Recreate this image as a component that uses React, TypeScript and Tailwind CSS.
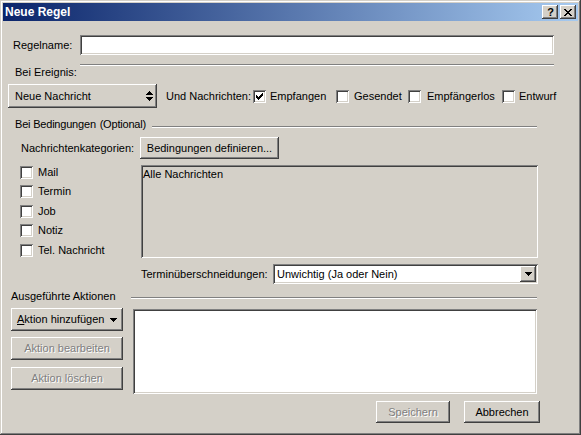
import React from "react";

const raised =
  "bg-[#d4d0c8] shadow-[inset_-1px_-1px_#404040,inset_1px_1px_#ffffff,inset_-2px_-2px_#808080,inset_2px_2px_#d4d0c8]";
const sunken =
  "shadow-[inset_1px_1px_#808080,inset_-1px_-1px_#ffffff,inset_2px_2px_#404040,inset_-2px_-2px_#d4d0c8]";
const disabledText = "text-[#808080] [text-shadow:1px_1px_0_#ffffff]";

function Check({ checked = false }: { checked?: boolean }) {
  return (
    <div className={`relative w-[13px] h-[13px] shrink-0 bg-white ${sunken}`}>
      {checked && (
        <svg
          width="7"
          height="7"
          viewBox="0 0 7 7"
          className="absolute left-[3px] top-[3px]"
          shapeRendering="crispEdges"
        >
          <path
            fill="#000"
            d="M6 0h1v1h-1z M5 1h2v1h-2z M0 2h1v1h-1z M4 2h3v1h-3z M0 3h2v1h-2z M3 3h3v1h-3z M0 4h5v1h-5z M1 5h3v1h-3z M2 6h1v1h-1z"
          />
        </svg>
      )}
    </div>
  );
}

function DownTri({ fill = "#000" }: { fill?: string }) {
  return (
    <svg width="7" height="4" viewBox="0 0 7 4" shapeRendering="crispEdges">
      <path fill={fill} d="M0 0h7v1H0z M1 1h5v1H1z M2 2h3v1H2z M3 3h1v1H3z" />
    </svg>
  );
}

function Etched({ className = "" }: { className?: string }) {
  return <div className={`h-[2px] border-t border-t-[#808080] border-b border-b-white ${className}`} />;
}

export default function App() {
  return (
    <div className="w-[581px] h-[435px] bg-[#d4d0c8] p-[3px] shadow-[inset_-1px_-1px_#404040,inset_1px_1px_#d4d0c8,inset_-2px_-2px_#808080,inset_2px_2px_#ffffff] font-['Liberation_Sans',Arial,sans-serif] text-[11px] leading-[13px] text-black overflow-hidden">
      {/* Title bar */}
      <div className="h-[18px] flex items-center bg-[linear-gradient(to_right,#0a246a,#a6caf0)] pl-[2px] pr-[2px]">
        <div className="flex-1 text-white font-bold text-[12px] leading-[14px]">Neue Regel</div>
        <div className={`w-[16px] h-[14px] flex items-center justify-center ${raised}`}>
          <span className="font-bold text-[11px] leading-[11px] text-black pl-[1px]">?</span>
        </div>
        <div className={`ml-[2px] w-[16px] h-[14px] flex items-center justify-center ${raised}`}>
          <svg width="8" height="7" viewBox="0 0 8 7" shapeRendering="crispEdges">
            <path
              fill="#000"
              d="M0 0h2v1H0z M6 0h2v1H6z M1 1h2v1H1z M5 1h2v1H5z M2 2h4v1H2z M3 3h2v1H3z M2 4h4v1H2z M1 5h2v1H1z M5 5h2v1H5z M0 6h2v1H0z M6 6h2v1H6z"
            />
          </svg>
        </div>
      </div>

      {/* Regelname */}
      <div className="mt-[14px] flex items-center h-[20px]">
        <div className="ml-[10px] w-[67px]">Regelname:</div>
        <div className={`w-[474px] h-[20px] bg-white ${sunken}`} />
      </div>

      {/* Bei Ereignis */}
      <div className="mt-[7px] flex h-[16px]">
        <div className="ml-[12px] w-[65px] mt-[4px]">Bei Ereignis:</div>
        <Etched className="w-[474px] mt-[2px]" />
      </div>

      {/* Neue Nachricht row */}
      <div className="mt-[6px] flex items-center h-[24px]">
        <div className={`ml-[5px] w-[149px] h-[24px] flex items-center pl-[7px] pr-[4px] ${raised}`}>
          <span className="flex-1">Neue Nachricht</span>
          <svg width="7" height="10" viewBox="0 0 7 10" shapeRendering="crispEdges">
            <path
              fill="#000"
              d="M3 0h1v1H3z M2 1h3v1H2z M1 2h5v1H1z M0 3h7v1H0z M0 6h7v1H0z M1 7h5v1H1z M2 8h3v1H2z M3 9h1v1H3z"
            />
          </svg>
        </div>
        <div className="ml-[9px] w-[87px]">Und Nachrichten:</div>
        <div className="flex items-center w-[83px]">
          <Check checked />
          <span className="ml-[4px]">Empfangen</span>
        </div>
        <div className="flex items-center w-[72px]">
          <Check />
          <span className="ml-[5px]">Gesendet</span>
        </div>
        <div className="flex items-center w-[94px]">
          <Check />
          <span className="ml-[6px]">Empfängerlos</span>
        </div>
        <div className="flex items-center">
          <Check />
          <span className="ml-[4px]">Entwurf</span>
        </div>
      </div>

      {/* Bei Bedingungen */}
      <div className="mt-[10px] flex h-[13px]">
        <div className="ml-[12px] w-[137px] whitespace-nowrap tracking-[-0.2px]">
          Bei Bedingungen <span className="ml-[1px]">(Optional)</span>
        </div>
        <Etched className="w-[385px] mt-[8px]" />
      </div>

      {/* Nachrichtenkategorien + button */}
      <div className="mt-[6px] flex items-center h-[22px]">
        <div className="ml-[18px] w-[119px]">Nachrichtenkategorien:</div>
        <div className={`w-[139px] h-[22px] flex items-center justify-center ${raised}`}>
          Bedingungen definieren...
        </div>
      </div>

      {/* Categories + list */}
      <div className="mt-[6px] flex">
        <div className="ml-[17px] w-[121px] flex flex-col">
          {[
            ["Mail", "mt-[1px]"],
            ["Termin", "mt-[6px]"],
            ["Job", "mt-[7px]"],
            ["Notiz", "mt-[6px]"],
            ["Tel. Nachricht", "mt-[7px]"],
          ].map(([label, mt]) => (
            <div key={label} className={`flex items-center h-[13px] ${mt}`}>
              <Check />
              <span className="ml-[5px]">{label}</span>
            </div>
          ))}
        </div>
        <div className={`w-[397px] h-[93px] bg-[#d4d0c8] pt-[3px] pl-[2px] ${sunken}`}>Alle Nachrichten</div>
      </div>

      {/* Terminüberschneidungen */}
      <div className="mt-[6px] flex items-center h-[20px]">
        <div className="ml-[138px] w-[132px]">Terminüberschneidungen:</div>
        <div className={`w-[265px] h-[20px] bg-white flex items-center pl-[4px] pr-[2px] ${sunken}`}>
          <span className="flex-1">Unwichtig (Ja oder Nein)</span>
          <div className={`w-[16px] h-[16px] flex items-center justify-center ${raised}`}>
            <DownTri />
          </div>
        </div>
      </div>

      {/* Ausgeführte Aktionen */}
      <div className="mt-[6px] flex h-[13px]">
        <div className="ml-[8px] w-[120px]">Ausgeführte Aktionen</div>
        <Etched className="w-[406px] mt-[7px]" />
      </div>

      {/* Actions */}
      <div className="mt-[5px] flex">
        <div className="ml-[8px] w-[112px] flex flex-col">
          <div className={`h-[23px] flex items-center pl-[6px] pr-[6px] ${raised}`}>
            <span className="flex-1">
              <span className="underline underline-offset-[1px]">A</span>ktion hinzufügen
            </span>
            <DownTri />
          </div>
          <div className={`mt-[6px] h-[23px] flex items-center justify-center ${raised} ${disabledText}`}>
            Aktion bearbeiten
          </div>
          <div className={`mt-[7px] h-[23px] flex items-center justify-center ${raised} ${disabledText}`}>
            Aktion löschen
          </div>
        </div>
        <div className={`ml-[10px] mt-[1px] w-[404px] h-[85px] bg-white ${sunken}`} />
      </div>

      {/* Bottom buttons */}
      <div className="mt-[7px] flex justify-end pr-[38px]">
        <div className={`w-[74px] h-[22px] flex items-center justify-center ${raised} ${disabledText}`}>Speichern</div>
        <div className={`ml-[14px] w-[76px] h-[22px] flex items-center justify-center ${raised}`}>Abbrechen</div>
      </div>
    </div>
  );
}
